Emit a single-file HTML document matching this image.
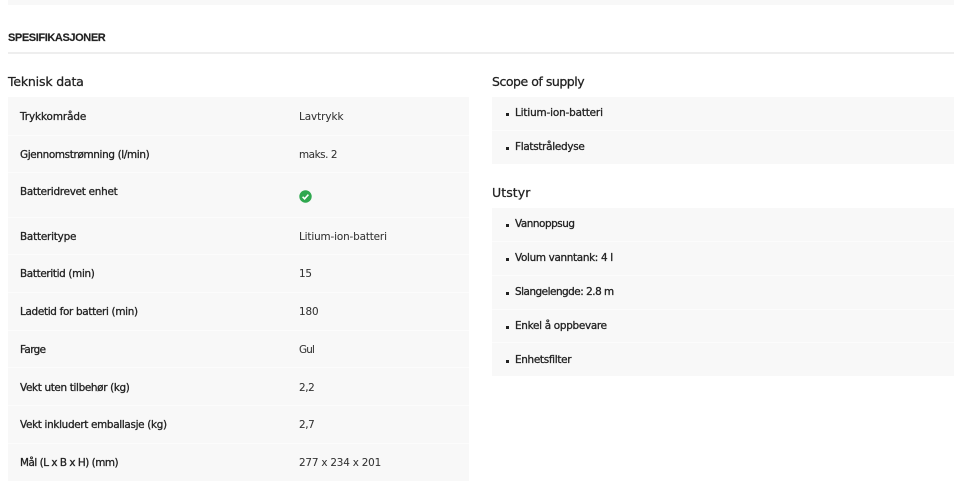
<!DOCTYPE html>
<html lang="no">
<head>
<meta charset="utf-8">
<title>Spesifikasjoner</title>
<style>
html,body{margin:0;padding:0;background:#fff;}
body{width:960px;height:496px;position:relative;overflow:hidden;font-family:"DejaVu Sans","Liberation Sans",sans-serif;color:#222;font-size:10.4px;}
.a{position:absolute;white-space:nowrap;}
.bg{position:absolute;background:#f8f8f8;}
.sep{position:absolute;height:1px;background:#fcfcfc;}
.l{position:absolute;left:20px;line-height:16px;white-space:nowrap;-webkit-text-stroke:.3px #222;}
.v{position:absolute;left:299px;line-height:16px;white-space:nowrap;color:#333;-webkit-text-stroke:.05px #333;}
.li{position:absolute;left:515px;line-height:16px;white-space:nowrap;-webkit-text-stroke:.3px #222;}
.b{position:absolute;left:506px;width:3px;height:3px;background:#222;}
h2{position:absolute;margin:0;font-size:12.5px;font-weight:400;line-height:18px;white-space:nowrap;color:#222;-webkit-text-stroke:.25px #222;}
</style>
</head>
<body>
<div class="bg" style="left:8px;top:0;width:946px;height:5px"></div>
<div class="a" style="left:8px;top:29.5px;font-family:'Liberation Sans',sans-serif;font-size:11px;line-height:16px;font-weight:700;letter-spacing:-.4px;color:#222;-webkit-text-stroke:.15px #222">SPESIFIKASJONER</div>
<div class="bg" style="left:8px;top:52px;width:946px;height:2px;background:#eeeeee"></div>

<h2 style="left:8px;top:73px;letter-spacing:-.17px">Teknisk data</h2>
<h2 style="left:492px;top:73px;letter-spacing:-.47px">Scope of supply</h2>
<h2 style="left:492px;top:184px;letter-spacing:.08px">Utstyr</h2>

<div class="bg" style="left:8px;top:97px;width:461px;height:384px"></div>
<div class="sep" style="left:8px;width:461px;top:135px"></div>
<div class="sep" style="left:8px;width:461px;top:172px"></div>
<div class="sep" style="left:8px;width:461px;top:217px"></div>
<div class="sep" style="left:8px;width:461px;top:254px"></div>
<div class="sep" style="left:8px;width:461px;top:292px"></div>
<div class="sep" style="left:8px;width:461px;top:330px"></div>
<div class="sep" style="left:8px;width:461px;top:367px"></div>
<div class="sep" style="left:8px;width:461px;top:405px"></div>
<div class="sep" style="left:8px;width:461px;top:443px"></div>

<div class="l" style="top:109px;letter-spacing:-.07px">Trykkområde</div><div class="v" style="top:109px;letter-spacing:-.05px">Lavtrykk</div>
<div class="l" style="top:147px;letter-spacing:-.33px">Gjennomstrømning (l/min)</div><div class="v" style="top:147px;letter-spacing:-.45px">maks. 2</div>
<div class="l" style="top:184px;letter-spacing:-.25px">Batteridrevet enhet</div>
<svg class="a" style="left:299px;top:190px" width="13" height="13" viewBox="0 0 13 13"><circle cx="6.5" cy="6.5" r="6.2" fill="#2fa84f"/><path d="M3.6 6.8l2 2 3.8-4.2" fill="none" stroke="#fff" stroke-width="1.6"/></svg>
<div class="l" style="top:229px;letter-spacing:-.2px">Batteritype</div><div class="v" style="top:229px;letter-spacing:-.14px">Litium-ion-batteri</div>
<div class="l" style="top:266px;letter-spacing:-.33px">Batteritid (min)</div><div class="v" style="top:266px;letter-spacing:-.2px">15</div>
<div class="l" style="top:304px;letter-spacing:-.3px">Ladetid for batteri (min)</div><div class="v" style="top:304px;letter-spacing:-.1px">180</div>
<div class="l" style="top:342px;letter-spacing:-.6px">Farge</div><div class="v" style="top:342px;letter-spacing:-.8px">Gul</div>
<div class="l" style="top:380px;letter-spacing:-.33px">Vekt uten tilbehør (kg)</div><div class="v" style="top:380px;letter-spacing:-.4px">2,2</div>
<div class="l" style="top:417px;letter-spacing:-.31px">Vekt inkludert emballasje (kg)</div><div class="v" style="top:417px;letter-spacing:-.4px">2,7</div>
<div class="l" style="top:455px;letter-spacing:-.47px">Mål (L x B x H) (mm)</div><div class="v" style="top:455px;letter-spacing:-.2px">277 x 234 x 201</div>

<div class="bg" style="left:492px;top:97px;width:462px;height:67px"></div>
<div class="sep" style="left:492px;width:462px;top:130px"></div>
<div class="b" style="top:113px"></div><div class="li" style="top:105px;letter-spacing:-.14px">Litium-ion-batteri</div>
<div class="b" style="top:147px"></div><div class="li" style="top:139px;letter-spacing:-.27px">Flatstråledyse</div>

<div class="bg" style="left:492px;top:208px;width:462px;height:168px"></div>
<div class="sep" style="left:492px;width:462px;top:241px"></div>
<div class="sep" style="left:492px;width:462px;top:275px"></div>
<div class="sep" style="left:492px;width:462px;top:309px"></div>
<div class="sep" style="left:492px;width:462px;top:342px"></div>
<div class="b" style="top:224px"></div><div class="li" style="top:216px;letter-spacing:-.45px">Vannoppsug</div>
<div class="b" style="top:258px"></div><div class="li" style="top:250px;letter-spacing:-.32px">Volum vanntank: 4 l</div>
<div class="b" style="top:292px"></div><div class="li" style="top:284px;letter-spacing:-.47px">Slangelengde: 2.8 m</div>
<div class="b" style="top:326px"></div><div class="li" style="top:318px;letter-spacing:-.28px">Enkel å oppbevare</div>
<div class="b" style="top:360px"></div><div class="li" style="top:352px;letter-spacing:-.3px">Enhetsfilter</div>
</body>
</html>
